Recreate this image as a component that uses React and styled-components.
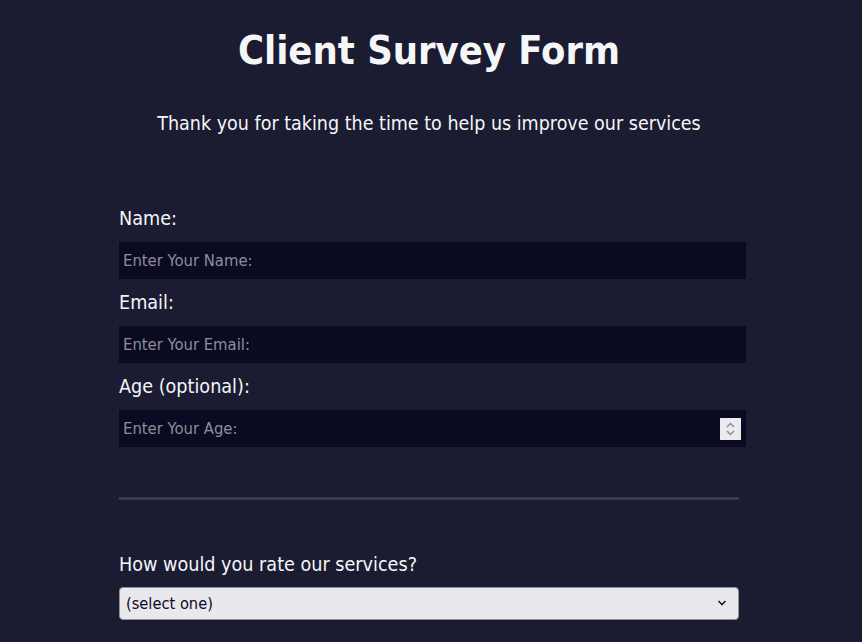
import React from "react";
import styled, { createGlobalStyle } from "styled-components";

const GlobalStyle = createGlobalStyle`
  html, body {
    margin: 0;
    padding: 0;
    background-color: #1b1b32;
    color: #f5f6f7;
    font-family: "DejaVu Sans Condensed", "DejaVu Sans", sans-serif;
  }
`;

const Page = styled.main`
  box-sizing: border-box;
  width: 100%;
  min-height: 642px;
  padding-right: 4px;
  display: flex;
  flex-direction: column;
  align-items: center;
`;

const Title = styled.h1`
  margin: 26px 0 0;
  font-size: 39.5px;
  font-weight: bold;
  line-height: 48px;
  text-align: center;
`;

const Subtitle = styled.p`
  margin: 38px 0 0;
  font-size: 19.5px;
  line-height: 24px;
  text-align: center;
`;

const Form = styled.form`
  width: 620px;
  margin-top: 69px;
  display: flex;
  flex-direction: column;
`;

const Fieldset = styled.fieldset`
  border: none;
  margin: 0;
  padding: 0;
  display: flex;
  flex-direction: column;
`;

const Label = styled.label`
  font-size: 19.6px;
  line-height: 24px;
  padding-top: 2px;
  margin-bottom: 11px;
`;

const FieldWrap = styled.div`
  position: relative;
  width: 627px;
  margin-bottom: 10px;
`;

const Input = styled.input`
  box-sizing: border-box;
  width: 100%;
  height: 37px;
  padding: 0 4px;
  border: none;
  outline: none;
  background-color: #0a0a23;
  color: #f5f6f7;
  font-family: inherit;
  font-size: 16.5px;

  &::placeholder {
    color: #8d8d9c;
  }
`;

const Spinner = styled.div`
  position: absolute;
  right: 5px;
  top: 8px;
  width: 21px;
  height: 22px;
  background-color: #ebebef;
  display: flex;
  align-items: center;
  justify-content: center;
`;

const Divider = styled.hr`
  width: 620px;
  margin: 40px 0 0;
  border: none;
  height: 3px;
  background-color: #3b3b4f;
`;

const Question = styled.label`
  margin-top: 53px;
  font-size: 19.6px;
  line-height: 24px;
  margin-bottom: 10px;
`;

const SelectWrap = styled.div`
  position: relative;
  width: 620px;
`;

const Select = styled.select`
  appearance: none;
  box-sizing: border-box;
  width: 100%;
  height: 33px;
  padding: 0 6px;
  border: 1px solid #8f8f9d;
  border-radius: 4px;
  background-color: #e9e9ed;
  color: #0a0a23;
  font-family: inherit;
  font-size: 16.3px;
`;

const Chevron = styled.svg`
  position: absolute;
  right: 12px;
  top: 12px;
  pointer-events: none;
`;

const App = () => {
  return (
    <Page>
      <GlobalStyle />
      <Title>Client Survey Form</Title>
      <Subtitle>Thank you for taking the time to help us improve our services</Subtitle>
      <Form>
        <Fieldset>
          <Label htmlFor="name">Name:</Label>
          <FieldWrap>
            <Input id="name" type="text" placeholder="Enter Your Name:" />
          </FieldWrap>
          <Label htmlFor="email">Email:</Label>
          <FieldWrap>
            <Input id="email" type="email" placeholder="Enter Your Email:" />
          </FieldWrap>
          <Label htmlFor="age">Age (optional):</Label>
          <FieldWrap>
            <Input id="age" type="text" placeholder="Enter Your Age:" />
            <Spinner>
              <svg width="11" height="16" viewBox="0 0 11 16">
                <path d="M2 6 L5.5 2.5 L9 6" fill="none" stroke="#8d8d9c" strokeWidth="1.5" />
                <path d="M2 10 L5.5 13.5 L9 10" fill="none" stroke="#8d8d9c" strokeWidth="1.5" />
              </svg>
            </Spinner>
          </FieldWrap>
        </Fieldset>
        <Divider />
        <Question htmlFor="rating">How would you rate our services?</Question>
        <SelectWrap>
          <Select id="rating" defaultValue="">
            <option value="" disabled>(select one)</option>
            <option value="1">Excellent</option>
            <option value="2">Good</option>
            <option value="3">Fair</option>
            <option value="4">Poor</option>
          </Select>
          <Chevron width="10" height="8" viewBox="0 0 10 8">
            <path d="M1.5 2 L5 5.5 L8.5 2" fill="none" stroke="#1b1b32" strokeWidth="1.6" />
          </Chevron>
        </SelectWrap>
      </Form>
    </Page>
  );
};

export default App;
